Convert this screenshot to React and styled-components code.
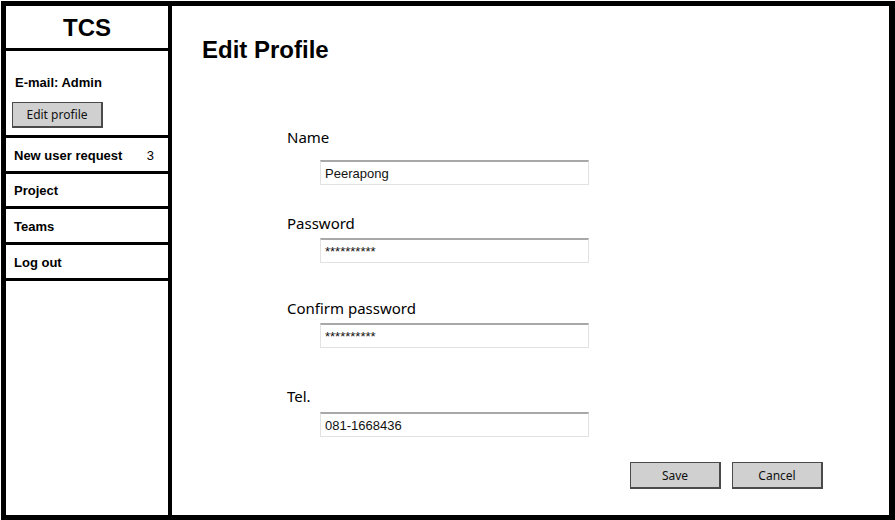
import React from "react";
import styled, { createGlobalStyle } from "styled-components";

const Global = createGlobalStyle`
  html, body { margin: 0; padding: 0; background: #fff; }
  body { font-family: "Liberation Sans", Arial, sans-serif; }
  * { box-sizing: border-box; }
`;

const sketch = `"Comic Sans MS", "Noto Sans", "DejaVu Sans", sans-serif`;

const Page = styled.div`
  padding: 1px 0 0 1px;
  width: 895px;
  height: 520px;
`;

const Frame = styled.div`
  width: 894px;
  height: 519px;
  border: 5px solid #000;
  border-right-width: 6px;
  display: flex;
`;

const Sidebar = styled.aside`
  width: 166px;
  flex-shrink: 0;
  border-right: 4px solid #000;
  display: flex;
  flex-direction: column;
`;

const Brand = styled.div`
  height: 45px;
  padding-top: 2px;
  border-bottom: 3px solid #000;
  display: flex;
  align-items: center;
  justify-content: center;
  font-weight: bold;
  font-size: 24px;
  color: #000;
`;

const Profile = styled.div`
  height: 87px;
  border-bottom: 3px solid #000;
  padding: 24px 0 0 6px;
  display: flex;
  flex-direction: column;
  align-items: flex-start;
`;

const Email = styled.div`
  font-weight: bold;
  font-size: 13px;
  line-height: 16px;
  margin-left: 3px;
  color: #000;
`;

const SketchButton = styled.button`
  width: 91px;
  height: ${(p) => p.$h || 26}px;
  background: #d0d0d0;
  border: 1px solid #4a4a4a;
  border-bottom-width: 2px;
  border-right-width: 2px;
  font-family: ${sketch};
  font-size: 12px;
  color: #111;
  padding: 0;
  cursor: pointer;
`;

const ProfileButton = styled(SketchButton)`
  margin-top: 11px;
`;

const NavItem = styled.div`
  height: ${(p) => p.$h || 36}px;
  margin-right: -4px;
  border-bottom: 3px solid #000;
  display: flex;
  align-items: center;
  justify-content: space-between;
  padding: 1px 18px 0 8px;
  font-weight: bold;
  font-size: 13px;
  color: #000;
`;

const Count = styled.span`
  font-weight: normal;
`;

const Main = styled.main`
  flex: 1;
  display: flex;
  flex-direction: column;
  padding: 30px 66px 0 30px;
`;

const Title = styled.h1`
  margin: 0;
  font-size: 24px;
  line-height: 28px;
  font-weight: bold;
  color: #000;
`;

const Form = styled.div`
  display: flex;
  flex-direction: column;
  margin-left: 85px;
  margin-top: 63px;
`;

const Field = styled.div`
  display: flex;
  flex-direction: column;
  margin-top: ${(p) => p.$top || 0}px;
`;

const Label = styled.label`
  font-family: ${sketch};
  font-size: 15px;
  line-height: 20px;
  color: #000;
  margin-bottom: ${(p) => p.$gap}px;
`;

const Input = styled.input`
  margin-left: 33px;
  width: 269px;
  height: 25px;
  border: 1px solid #e2e2e2;
  border-top: 2px solid #a8a8a8;
  padding: 0 4px;
  font-family: "Liberation Sans", Arial, sans-serif;
  font-size: 13px;
  color: #111;
  background: #fff;
  outline: none;
`;

const Actions = styled.div`
  display: flex;
  justify-content: flex-end;
  gap: 11px;
  margin-top: 25px;
`;

const fields = [
  { label: "Name", value: "Peerapong", top: 0, gap: 13 },
  { label: "Password", value: "**********", top: 28, gap: 5 },
  { label: "Confirm password", value: "**********", top: 35, gap: 5 },
  { label: "Tel.", value: "081-1668436", top: 38, gap: 6 },
];

export default function App() {
  return (
    <>
      <Global />
      <Page>
        <Frame>
          <Sidebar>
            <Brand>TCS</Brand>
            <Profile>
              <Email>E-mail: Admin</Email>
              <ProfileButton>Edit profile</ProfileButton>
            </Profile>
            <NavItem>
              <span>New user request</span>
              <Count>3</Count>
            </NavItem>
            <NavItem $h={35}>Project</NavItem>
            <NavItem>Teams</NavItem>
            <NavItem>Log out</NavItem>
          </Sidebar>
          <Main>
            <Title>Edit Profile</Title>
            <Form>
              {fields.map((f) => (
                <Field key={f.label} $top={f.top}>
                  <Label $gap={f.gap}>{f.label}</Label>
                  <Input readOnly defaultValue={f.value} />
                </Field>
              ))}
            </Form>
            <Actions>
              <SketchButton $h={27}>Save</SketchButton>
              <SketchButton $h={27}>Cancel</SketchButton>
            </Actions>
          </Main>
        </Frame>
      </Page>
    </>
  );
}
